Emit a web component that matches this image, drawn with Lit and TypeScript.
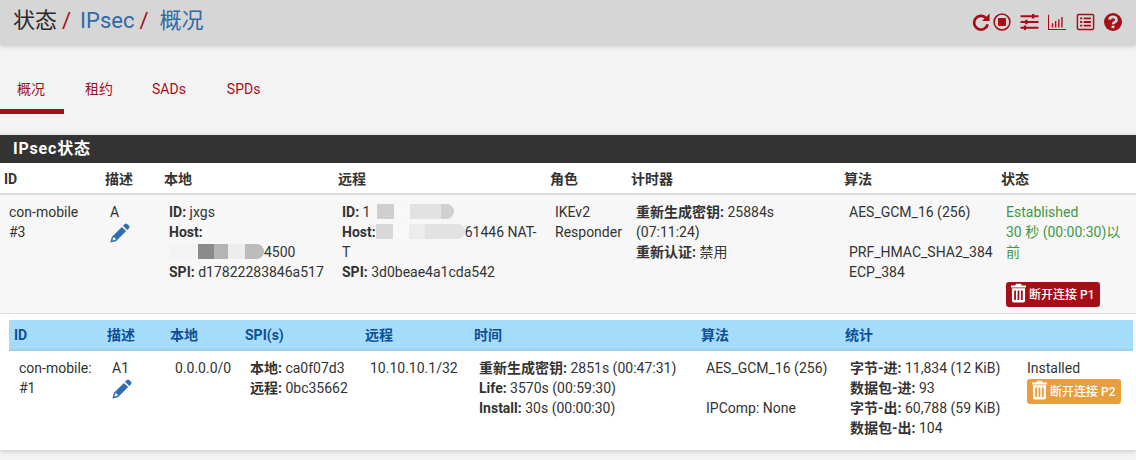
import { LitElement, html, css, svg } from "lit";
import { customElement } from "lit/decorators.js";

const trash = svg`<svg class="trash" viewBox="0 0 16 20"><path fill="currentColor" fill-rule="evenodd" d="M5.4 0h5.2l.7 2H16v2H0V2h4.7zM1 5h14v13a2 2 0 0 1-2 2H3a2 2 0 0 1-2-2zm2.4 2.2v10.2h1.9V7.2zm3.6 0v10.2h1.9V7.2zm3.6 0v10.2h1.9V7.2z"/></svg>`;
const pencil = svg`<svg class="pencil" viewBox="0 0 20 20"><path fill="currentColor" fill-rule="evenodd" d="M14.6 1.2a2 2 0 0 1 2.8 0l1.4 1.4a2 2 0 0 1 0 2.8l-1.6 1.6-4.2-4.2zM11.9 3.9l4.2 4.2L6 18.2.4 19.6l1.4-5.6zM3.3 14.2l-.9 3.4 3.4-.9-.6-1.9z"/></svg>`;

@customElement("app-root")
export class AppRoot extends LitElement {
  static styles = css`
    :host {
      display: block;
      width: 1136px;
      height: 460px;
      overflow: hidden;
      background: #f3f3f3;
      font-family: Roboto, "Noto Sans CJK SC", sans-serif;
      font-size: 14px;
      line-height: 20px;
      color: #333;
    }
    .top {
      height: 44px;
      background: #d6d6d6;
      box-shadow: 0 2px 5px rgba(0, 0, 0, 0.2);
      display: flex;
      align-items: center;
      justify-content: space-between;
      padding: 0 14px 2px 13px;
      box-sizing: border-box;
    }
    .crumbs {
      font-size: 22px;
      line-height: 30px;
      display: flex;
      color: #2a2a2a;
    }
    .crumbs .slash { color: #a50d17; margin: 0 9px 0 5px; }
    .crumbs .slash.b { margin: 0 11px 0 5px; }
    .crumbs .link { color: #2e6aa8; }
    .tools { display: flex; align-items: center; color: #a50d17; margin-top: 2px; }
    .tools svg { display: block; width: 18px; height: 18px; margin-left: 9px; }
    .tools svg.replay { margin-left: 0; }
    .tools svg.stop { margin-left: 3px; }
    .tools svg.sliders { width: 19px; }
    .tools svg.list { width: 19px; margin-left: 10px; }
    .tabs { display: flex; margin-top: 23px; height: 47px; }
    .tab {
      padding: 12px 20px 0;
      color: #a50d17;
      box-sizing: border-box;
      height: 47px;
    }
    .tab.active { padding-left: 17px; padding-right: 19px; border-bottom: 5px solid #a50d17; }
    .tab.lease { padding-left: 21px; padding-right: 19px; }
    .tab.sads { padding-right: 21px; }
    .panel {
      margin-top: 21px;
      background: #fff;
      box-shadow: 0 1px 5px rgba(0, 0, 0, 0.2);
      height: 315px;
    }
    .heading {
      height: 28px;
      background: #333;
      color: #fff;
      font-size: 16px;
      font-weight: 700;
      line-height: 27px;
      letter-spacing: 0.8px;
      padding-left: 13px;
    }
    .grid { display: grid; }
    .p1 { grid-template-columns: 101px 59px 174px 212px 81px 213px 157px 139px; }
    .p2 { grid-template-columns: 93px 63px 75px 120px 109px 227px 144px 176px 114px; }
    .head { font-weight: 700; }
    .p1.head { height: 30px; border-bottom: 2px solid #ddd; line-height: 32px; }
    .p1.head > div { padding-left: 4px; }
    .p1.body {
      height: 118px;
      background: #f7f7f7;
      border-bottom: 1px solid #ddd;
    }
    .p1.body > div { padding: 7px 4px 0 9px; }
    .p1.body > div.remote { padding-left: 8px; }
    .nested { padding: 6px 3px 0 9px; }
    .p2.head {
      height: 31px;
      line-height: 30px;
      background: #a5dcfb;
      color: #0f4f94;
      box-shadow: inset 0 -2px 0 #9fcfeb;
    }
    .p2.head > div { padding-left: 5px; }
    .p2.body { height: 98px; }
    .p2.body > div { padding: 7px 4px 0 10px; }
    .p2.body > div.last { padding-left: 0; padding-right: 0; margin-left: 11px; }
    b { font-weight: 700; }
    .green { color: #3c9a45; }
    .pencil { display: block; width: 20px; height: 20px; color: #2f6db5; margin-top: 1px; }
    .btn {
      display: inline-flex;
      align-items: center;
      gap: 3px;
      height: 25px;
      width: 94px;
      box-sizing: border-box;
      padding: 0 0 0 5px;
      border-radius: 3px;
      color: #fff;
      font-size: 12px;
      white-space: nowrap;
      font-weight: 500;
    }
    .btn.red { background: #a50d17; margin-top: 20px; }
    .btn.orange { background: #e89d3f; margin-top: 1px; }
    .trash { width: 15px; height: 20px; flex: none; margin-top: -3px; }
    .blob {
      display: inline-block;
      height: 15px;
      vertical-align: -2px;
    }
    .w1 {
      width: 95px;
      border-radius: 0 8px 8px 0;
      background: linear-gradient(90deg, #f3f3f3 0 31%, #8a8a8a 31% 47%, #b4b4b4 47% 62%, #ededed 62% 80%, #bbb 80% 100%);
    }
    .w2 {
      width: 84px;
      border-radius: 0 8px 8px 0;
      background: linear-gradient(90deg, #f7f7f7 0 8%, #cfcfcf 8% 28%, #f8f8f8 28% 48%, #e2e2e2 48% 85%, #d0d0d0 85% 100%);
    }
    .w3 {
      width: 89px;
      border-radius: 0 8px 8px 0;
      background: linear-gradient(90deg, #d8d8d8 0 19%, #f8f8f8 19% 37%, #ececec 37% 55%, #e2e2e2 55% 100%);
    }
  `;

  render() {
    return html`
      <div class="top">
        <div class="crumbs">
          <span>状态</span><span class="slash">/</span>
          <span class="link">IPsec</span><span class="slash b">/</span>
          <span class="link">概况</span>
        </div>
        <div class="tools">
          ${svg`<svg class="replay" viewBox="0 0 20 20"><path fill="none" stroke="currentColor" stroke-width="3" d="M15.4 5.4A7.6 7.6 0 1 0 17.4 12.6"/><path fill="currentColor" d="M19.6 0.6v8.4H11.2z"/></svg>`}
          ${svg`<svg class="stop" viewBox="0 0 20 20"><circle cx="10" cy="10" r="8.8" fill="none" stroke="currentColor" stroke-width="1.7"/><rect x="5.6" y="5.6" width="8.8" height="8.8" rx="1" fill="currentColor"/></svg>`}
          ${svg`<svg class="sliders" viewBox="0 0 20 20"><path stroke="currentColor" stroke-width="2.2" d="M0 3.5h20M0 10h20M0 16.5h20"/><path stroke="currentColor" stroke-width="2.6" d="M14 1v5M6.5 7.5v5M5 14v5"/></svg>`}
          ${svg`<svg viewBox="0 0 20 20"><path fill="none" stroke="currentColor" stroke-width="1.2" d="M.6 2V18.4H20"/><path stroke="currentColor" stroke-width="1.5" d="M5 16v-4.5M8.5 16v-7M12 16v-9M15.5 16V4.5"/></svg>`}
          ${svg`<svg class="list" viewBox="0 0 20 20"><rect x="1" y="1.6" width="18" height="16.8" rx="1.5" fill="none" stroke="currentColor" stroke-width="1.6"/><path stroke="currentColor" stroke-width="2" d="M4 6h2.4M4 10h2.4M4 14h2.4M8 6h8M8 10h8M8 14h8"/></svg>`}
          ${svg`<svg viewBox="0 0 20 20"><circle cx="10" cy="10" r="10" fill="currentColor"/><path fill="none" stroke="#d6d6d6" stroke-width="3" d="M6.2 7.4a3.8 3.2 0 1 1 5.6 2.9c-1.1.6-1.8 1-1.8 2.3"/><rect x="8.4" y="14" width="3.2" height="2.9" fill="#d6d6d6"/></svg>`}
        </div>
      </div>

      <div class="tabs">
        <div class="tab active">概况</div>
        <div class="tab lease">租约</div>
        <div class="tab sads">SADs</div>
        <div class="tab">SPDs</div>
      </div>

      <div class="panel">
        <div class="heading">IPsec状态</div>
        <div class="grid p1 head">
          <div>ID</div><div>描述</div><div>本地</div><div>远程</div>
          <div>角色</div><div>计时器</div><div>算法</div><div>状态</div>
        </div>
        <div class="grid p1 body">
          <div>con-mobile<br />#3</div>
          <div>A${pencil}</div>
          <div>
            <b>ID:</b> jxgs<br />
            <b>Host:</b><br />
            <span class="blob w1"></span>4500<br />
            <b>SPI:</b> d17822283846a517
          </div>
          <div class="remote">
            <b>ID:</b> 1<span class="blob w2"></span><br />
            <b>Host:</b><span class="blob w3"></span>61446 NAT-T<br />
            <b>SPI:</b> 3d0beae4a1cda542
          </div>
          <div>IKEv2<br />Responder</div>
          <div>
            <b>重新生成密钥:</b> 25884s (07:11:24)<br />
            <b>重新认证:</b> 禁用
          </div>
          <div>AES_GCM_16 (256)<br /><br />PRF_HMAC_SHA2_384<br />ECP_384</div>
          <div>
            <span class="green">Established<br />30 秒 (00:00:30)以前</span><br />
            <span class="btn red">${trash}断开连接 P1</span>
          </div>
        </div>
        <div class="nested">
          <div class="grid p2 head">
            <div>ID</div><div>描述</div><div>本地</div><div>SPI(s)</div><div>远程</div>
            <div>时间</div><div>算法</div><div>统计</div><div></div>
          </div>
          <div class="grid p2 body">
            <div>con-mobile:<br />#1</div>
            <div>A1${pencil}</div>
            <div>0.0.0.0/0</div>
            <div><b>本地:</b> ca0f07d3<br /><b>远程:</b> 0bc35662</div>
            <div>10.10.10.1/32</div>
            <div>
              <b>重新生成密钥:</b> 2851s (00:47:31)<br />
              <b>Life:</b> 3570s (00:59:30)<br />
              <b>Install:</b> 30s (00:00:30)
            </div>
            <div>AES_GCM_16 (256)<br /><br />IPComp: None</div>
            <div>
              <b>字节-进:</b> 11,834 (12 KiB)<br />
              <b>数据包-进:</b> 93<br />
              <b>字节-出:</b> 60,788 (59 KiB)<br />
              <b>数据包-出:</b> 104
            </div>
            <div class="last">
              Installed<br />
              <span class="btn orange">${trash}断开连接 P2</span>
            </div>
          </div>
        </div>
      </div>
    `;
  }
}
